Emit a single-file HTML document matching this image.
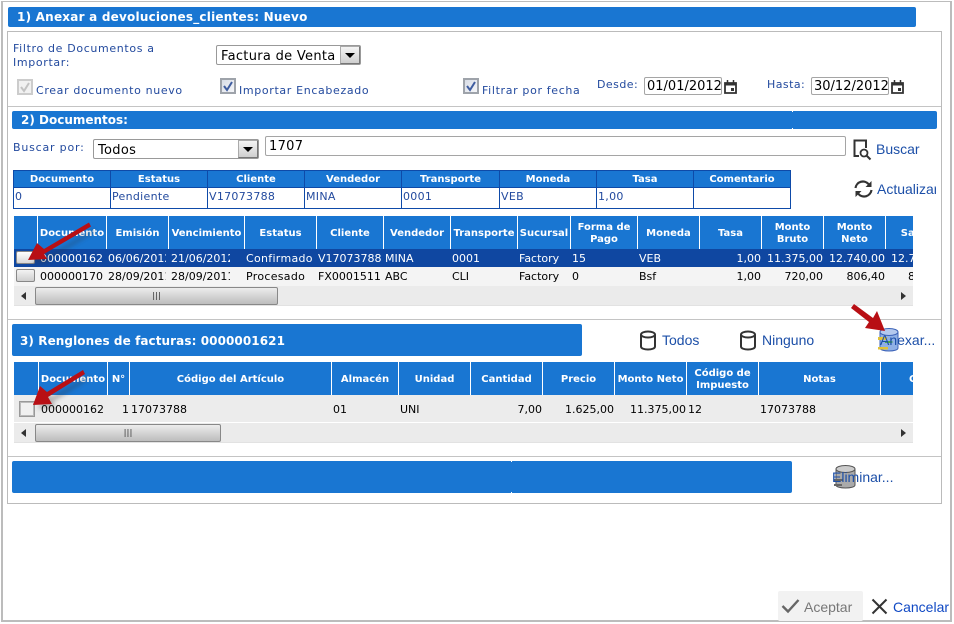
<!DOCTYPE html>
<html><head><meta charset="utf-8">
<style>
html,body{margin:0;padding:0;background:#fff;width:954px;height:624px;overflow:hidden}
body{position:relative;font-family:"DejaVu Sans","Liberation Sans",sans-serif;font-size:11px;color:#000}
div,span{position:absolute;white-space:nowrap;box-sizing:border-box}
.bar{background:#1976d2;border-radius:2px}
.bt{color:#fff;font-weight:bold;font-size:12px;letter-spacing:.22px;line-height:14px}
.l{color:#234a9e;font-size:11px;line-height:14px;letter-spacing:.65px}
.lnk{color:#1c4fa8;font-family:"Liberation Sans",sans-serif;font-size:14px;line-height:16px}
.sel{background:#fff;border:1px solid #999;border-radius:2px;font-size:13px;line-height:21px;padding-left:4px;letter-spacing:.3px}
.arr{top:0;right:0;bottom:0;background:linear-gradient(#f4f4f4,#cfcfcf);border:1px solid #777;border-top-color:#aaa;border-left-color:#aaa;width:20px}
.arr:after{content:"";position:absolute;left:4px;top:6px;border-left:5px solid transparent;border-right:5px solid transparent;border-top:5px solid #000}
.inp{background:#fff;border:1px solid #a5a5a5;border-radius:2px;font-size:13px;line-height:18px;overflow:hidden}
.cb{width:16px;height:16px;background:linear-gradient(135deg,#d8dde6,#f4f5f8);border:2px solid #9ea3aa}
.h{color:#fff;font-weight:bold;font-size:10px;line-height:12px;text-align:center;white-space:normal}
.th{color:#fff;font-weight:bold;font-size:10px;line-height:20px;text-align:center;top:170px;height:17px}
.td{color:#234a9e;font-size:11px;line-height:20px;top:187px;height:20px;padding-left:2px;letter-spacing:.3px}
.sep{width:1px;background:#fff}
.c{font-size:11px;line-height:18px}
.btn{width:19px;height:13px;border:1px solid #888;border-radius:2px;background:linear-gradient(#f3f3f3,#cfcfcf)}
.sb{background:#ebebeb;border-bottom:1px solid #e2e2e2}
.th2{height:18px;border:1px solid #888;border-radius:2px;background:linear-gradient(#ececec,#d4d4d4 50%,#bdbdbd)}
.g{color:#555;font-size:8px;line-height:16px;text-align:center;font-weight:bold}
</style></head>
<body>
<!-- window frame -->
<div style="left:1px;top:1px;width:951px;height:621px;border:1px solid #bcbcbc;border-width:1px 2px 2px 2px"></div>

<div class="bar" style="left:8px;top:7px;width:908px;height:20px"></div>
<span class="bt" style="left:17px;top:10px">1) Anexar a devoluciones_clientes: Nuevo</span>

<div style="left:7px;top:31px;width:935px;height:473px;border:1px solid #bbb"></div>
<div style="left:8px;top:106px;width:933px;height:1px;background:#c4c4c4"></div>
<div style="left:8px;top:319px;width:933px;height:1px;background:#c4c4c4"></div>
<div style="left:8px;top:456px;width:933px;height:1px;background:#c4c4c4"></div>

<span class="l" style="left:13px;top:42px">Filtro de Documentos a</span>
<span class="l" style="left:13px;top:56px">Importar:</span>
<div class="sel" style="left:216px;top:45px;width:145px;height:20px">Factura de Venta<div class="arr"></div></div>

<div class="cb" style="left:17px;top:79px;border-color:#ccc;background:#f1f1f1"></div>
<svg style="position:absolute;left:19px;top:81px" width="12" height="12"><path d="M2 6l3 4 5-8" fill="none" stroke="#c2c2c2" stroke-width="2"/></svg>
<span class="l" style="left:36px;top:84px">Crear documento nuevo</span>
<div class="cb" style="left:220px;top:78px"></div>
<svg style="position:absolute;left:222px;top:80px" width="12" height="12"><path d="M2 6l3 4 5-8" fill="none" stroke="#3f5da0" stroke-width="2"/></svg>
<span class="l" style="left:239px;top:84px">Importar Encabezado</span>
<div class="cb" style="left:463px;top:78px"></div>
<svg style="position:absolute;left:465px;top:80px" width="12" height="12"><path d="M2 6l3 4 5-8" fill="none" stroke="#3f5da0" stroke-width="2"/></svg>
<span class="l" style="left:482px;top:84px">Filtrar por fecha</span>
<span class="l" style="left:597px;top:78px;letter-spacing:.45px">Desde:</span>
<div class="inp" style="left:644px;top:77px;width:78px;height:18px;padding-left:2px">01/01/2012</div>
<svg style="position:absolute;left:724px;top:80px" width="13" height="14"><path d="M1 3h11v10H1z" fill="none" stroke="#333" stroke-width="1.800"/><path d="M1 4.500h11" stroke="#333" stroke-width="2"/><path d="M3.500 0v3M9.500 0v3" stroke="#333" stroke-width="1.500"/><rect x="7" y="8" width="3" height="3" fill="#333"/></svg>
<span class="l" style="left:767px;top:78px;letter-spacing:.45px">Hasta:</span>
<div class="inp" style="left:811px;top:77px;width:78px;height:18px;padding-left:2px">30/12/2012</div>
<svg style="position:absolute;left:891px;top:80px" width="13" height="14"><path d="M1 3h11v10H1z" fill="none" stroke="#333" stroke-width="1.800"/><path d="M1 4.500h11" stroke="#333" stroke-width="2"/><path d="M3.500 0v3M9.500 0v3" stroke="#333" stroke-width="1.500"/><rect x="7" y="8" width="3" height="3" fill="#333"/></svg>

<div class="bar" style="left:12px;top:111px;width:925px;height:18px"></div>
<div style="left:792px;top:111px;width:1px;height:1px;background:#fff"></div>
<div style="left:792px;top:128px;width:1px;height:1px;background:#fff"></div>
<span class="bt" style="left:21px;top:113px;letter-spacing:0">2) Documentos:</span>
<span class="l" style="left:13px;top:141px;letter-spacing:.8px">Buscar por:</span>
<div class="sel" style="left:93px;top:139px;width:166px;height:20px">Todos<div class="arr"></div></div>
<div class="inp" style="left:265px;top:136px;width:581px;height:20px;padding-left:3px;line-height:20px;letter-spacing:.3px">1707</div>
<svg style="position:absolute;left:852px;top:139px" width="21" height="22"><path d="M7 17H2.500V1.500H14V9" fill="none" stroke="#333" stroke-width="2"/><circle cx="12" cy="14" r="3.500" fill="none" stroke="#333" stroke-width="1.800"/><path d="M14.500 16.500l4 4" stroke="#333" stroke-width="2"/></svg>
<span class="lnk" style="left:876px;top:141px">Buscar</span>
<svg style="position:absolute;left:853px;top:179px" width="21" height="20" viewBox="0 0 21 20"><path d="M2.500 9a7.500 7.500 0 0 1 13-4l2 2M18.500 11a7.500 7.500 0 0 1-13 4l-2-2" fill="none" stroke="#333" stroke-width="2.200"/><path d="M18.500 2v6h-6zM2.500 18v-6h6z" fill="#333"/></svg>
<div class="lnk" style="left:877px;top:181px;width:59px;overflow:hidden">Actualizar</div>

<!-- table 1 -->
<div style="left:13px;top:170px;width:778px;height:39px;border:1px solid #0e4aa8"></div>
<div style="left:14px;top:171px;width:776px;height:16px;background:#1976d2"></div>
<div style="left:14px;top:187px;width:776px;height:1px;background:#0e4aa8"></div>
<div style="left:110px;top:170px;width:1px;height:38px;background:#0e4aa8"></div>
<div style="left:207px;top:170px;width:1px;height:38px;background:#0e4aa8"></div>
<div style="left:304px;top:170px;width:1px;height:38px;background:#0e4aa8"></div>
<div style="left:401px;top:170px;width:1px;height:38px;background:#0e4aa8"></div>
<div style="left:499px;top:170px;width:1px;height:38px;background:#0e4aa8"></div>
<div style="left:596px;top:170px;width:1px;height:38px;background:#0e4aa8"></div>
<div style="left:693px;top:170px;width:1px;height:38px;background:#0e4aa8"></div>
<span class="th" style="left:14px;width:96px">Documento</span>
<span class="th" style="left:111px;width:96px">Estatus</span>
<span class="th" style="left:208px;width:96px">Cliente</span>
<span class="th" style="left:305px;width:96px">Vendedor</span>
<span class="th" style="left:402px;width:97px">Transporte</span>
<span class="th" style="left:500px;width:96px">Moneda</span>
<span class="th" style="left:597px;width:96px">Tasa</span>
<span class="th" style="left:694px;width:96px">Comentario</span>
<span class="td" style="left:13px">0</span>
<span class="td" style="left:110px">Pendiente</span>
<span class="td" style="left:207px">V17073788</span>
<span class="td" style="left:304px">MINA</span>
<span class="td" style="left:401px">0001</span>
<span class="td" style="left:499px">VEB</span>
<span class="td" style="left:596px">1,00</span>

<!-- grid 1 -->
<div style="left:14px;top:216px;width:899px;height:90px;overflow:hidden">
<div style="left:0;top:0;width:899px;height:33px;background:#1976d2"></div>
<div style="left:0;top:33px;width:899px;height:18px;background:#0f47a1"></div>
<div style="left:0;top:51px;width:899px;height:19px;background:#f4f4f4"></div>
<div class="sep" style="left:23px;top:0;height:33px"></div>
<div class="sep" style="left:92px;top:0;height:33px"></div>
<div class="sep" style="left:154px;top:0;height:33px"></div>
<div class="sep" style="left:230px;top:0;height:33px"></div>
<div class="sep" style="left:302px;top:0;height:33px"></div>
<div class="sep" style="left:369px;top:0;height:33px"></div>
<div class="sep" style="left:436px;top:0;height:33px"></div>
<div class="sep" style="left:503px;top:0;height:33px"></div>
<div class="sep" style="left:556px;top:0;height:33px"></div>
<div class="sep" style="left:623px;top:0;height:33px"></div>
<div class="sep" style="left:685px;top:0;height:33px"></div>
<div class="sep" style="left:747px;top:0;height:33px"></div>
<div class="sep" style="left:809px;top:0;height:33px"></div>
<div class="sep" style="left:871px;top:0;height:33px"></div>
<div class="h" style="left:24px;top:12px;width:68px">Documento</div>
<div class="h" style="left:93px;top:12px;width:61px">Emisión</div>
<div class="h" style="left:155px;top:12px;width:75px">Vencimiento</div>
<div class="h" style="left:231px;top:12px;width:71px">Estatus</div>
<div class="h" style="left:303px;top:12px;width:66px">Cliente</div>
<div class="h" style="left:370px;top:12px;width:66px">Vendedor</div>
<div class="h" style="left:437px;top:12px;width:66px">Transporte</div>
<div class="h" style="left:504px;top:12px;width:52px">Sucursal</div>
<div class="h" style="left:557px;top:6px;width:66px">Forma de<br>Pago</div>
<div class="h" style="left:624px;top:12px;width:61px">Moneda</div>
<div class="h" style="left:686px;top:12px;width:61px">Tasa</div>
<div class="h" style="left:748px;top:6px;width:61px">Monto<br>Bruto</div>
<div class="h" style="left:810px;top:6px;width:61px">Monto<br>Neto</div>
<div class="h" style="left:872px;top:12px;width:61px">Saldo</div>

<div class="btn" style="left:2px;top:35px;background:linear-gradient(#fff,#d8d8d8)"></div>
<div class="btn" style="left:2px;top:53px"></div>

<span class="c" style="left:26px;top:34px;color:#fff">000000162</span>
<div class="c" style="left:94px;top:34px;color:#fff;width:58px;overflow:hidden">06/06/2012</div>
<div class="c" style="left:157px;top:34px;color:#fff;width:59px;overflow:hidden">21/06/2012</div>
<span class="c" style="left:232px;top:34px;color:#fff;letter-spacing:.3px">Confirmado</span>
<span class="c" style="left:304px;top:34px;color:#fff">V17073788</span>
<span class="c" style="left:371px;top:34px;color:#fff">MINA</span>
<span class="c" style="left:438px;top:34px;color:#fff">0001</span>
<span class="c" style="left:505px;top:34px;color:#fff">Factory</span>
<span class="c" style="left:558px;top:34px;color:#fff">15</span>
<span class="c" style="left:625px;top:34px;color:#fff">VEB</span>
<span class="c" style="right:152px;top:34px;color:#fff">1,00</span>
<span class="c" style="right:90px;top:34px;color:#fff">11.375,00</span>
<span class="c" style="right:28px;top:34px;color:#fff">12.740,00</span>
<span class="c" style="left:877px;top:34px;color:#fff">12.740,00</span>

<span class="c" style="left:26px;top:52px">000000170</span>
<div class="c" style="left:94px;top:52px;width:58px;overflow:hidden">28/09/2011</div>
<div class="c" style="left:157px;top:52px;width:59px;overflow:hidden">28/09/2011</div>
<span class="c" style="left:232px;top:52px;letter-spacing:.3px">Procesado</span>
<span class="c" style="left:304px;top:52px">FX0001511</span>
<span class="c" style="left:371px;top:52px">ABC</span>
<span class="c" style="left:438px;top:52px">CLI</span>
<span class="c" style="left:505px;top:52px">Factory</span>
<span class="c" style="left:558px;top:52px">0</span>
<span class="c" style="left:625px;top:52px">Bsf</span>
<span class="c" style="right:152px;top:52px">1,00</span>
<span class="c" style="right:90px;top:52px">720,00</span>
<span class="c" style="right:28px;top:52px">806,40</span>
<span class="c" style="left:894px;top:52px">806,40</span>

<div class="sb" style="left:0;top:70px;width:899px;height:20px"></div>
<div style="left:7px;top:76px;border-top:4px solid transparent;border-bottom:4px solid transparent;border-right:5px solid #333"></div>
<div style="left:887px;top:76px;border-top:4px solid transparent;border-bottom:4px solid transparent;border-left:5px solid #333"></div>
<div class="th2" style="left:21px;top:71px;width:243px"><div class="g" style="left:0;width:241px;top:0">|||</div></div>
</div>

<!-- section 3 -->
<div class="bar" style="left:12px;top:324px;width:570px;height:32px"></div>
<span class="bt" style="left:20px;top:334px;letter-spacing:.08px">3) Renglones de facturas: 0000001621</span>
<svg style="position:absolute;left:639px;top:330px" width="18" height="21"><ellipse cx="9" cy="4.500" rx="7" ry="3" fill="none" stroke="#333" stroke-width="2"/><path d="M2 4.500v12c0 4 14 4 14 0v-12" fill="none" stroke="#333" stroke-width="2"/></svg>
<span class="lnk" style="left:662px;top:332px">Todos</span>
<svg style="position:absolute;left:739px;top:330px" width="18" height="21"><ellipse cx="9" cy="4.500" rx="7" ry="3" fill="none" stroke="#333" stroke-width="2"/><path d="M2 4.500v12c0 4 14 4 14 0v-12" fill="none" stroke="#333" stroke-width="2"/></svg>
<span class="lnk" style="left:762px;top:332px">Ninguno</span>
<svg style="position:absolute;left:877px;top:327px" width="24" height="26"><path d="M3 5v16c0 4 18 4 18 0V5z" fill="#8fb0e6" stroke="#3c63b8"/><ellipse cx="12" cy="5" rx="9" ry="3.500" fill="#b4c9ee" stroke="#3c63b8"/><rect x="1" y="10" width="9" height="3" fill="#e0c23a"/><rect x="1" y="20" width="10" height="2.500" fill="#e0c23a"/><path d="M8 14h6l-2-2 4 3-4 3 2-2H8z" fill="#4aa84a"/></svg>
<span class="lnk" style="left:880px;top:332px">Anexar...</span>

<!-- grid 2 -->
<div style="left:14px;top:362px;width:899px;height:81px;overflow:hidden">
<div style="left:0;top:0;width:899px;height:33px;background:#1976d2"></div>
<div style="left:0;top:33px;width:899px;height:27px;background:#ececec"></div>
<div class="sep" style="left:24px;top:0;height:33px"></div>
<div class="sep" style="left:93px;top:0;height:33px"></div>
<div class="sep" style="left:115px;top:0;height:33px"></div>
<div class="sep" style="left:317px;top:0;height:33px"></div>
<div class="sep" style="left:384px;top:0;height:33px"></div>
<div class="sep" style="left:456px;top:0;height:33px"></div>
<div class="sep" style="left:528px;top:0;height:33px"></div>
<div class="sep" style="left:600px;top:0;height:33px"></div>
<div class="sep" style="left:672px;top:0;height:33px"></div>
<div class="sep" style="left:744px;top:0;height:33px"></div>
<div class="sep" style="left:866px;top:0;height:33px"></div>
<div class="h" style="left:25px;top:12px;width:68px">Documento</div>
<div class="h" style="left:94px;top:12px;width:21px">N°</div>
<div class="h" style="left:116px;top:12px;width:201px">Código del Artículo</div>
<div class="h" style="left:318px;top:12px;width:66px">Almacén</div>
<div class="h" style="left:385px;top:12px;width:71px">Unidad</div>
<div class="h" style="left:457px;top:12px;width:71px">Cantidad</div>
<div class="h" style="left:529px;top:12px;width:71px">Precio</div>
<div class="h" style="left:601px;top:12px;width:71px">Monto Neto</div>
<div class="h" style="left:673px;top:6px;width:71px">Código de<br>Impuesto</div>
<div class="h" style="left:745px;top:12px;width:121px">Notas</div>
<div class="h" style="left:895px;top:12px;width:40px;text-align:left">Comentario</div>
<div style="left:5px;top:39px;width:16px;height:16px;background:#f0f0f0;border:1px solid #999;box-shadow:inset 0 0 0 1px #bbb"></div>
<span class="c" style="left:27px;top:39px">000000162</span>
<span class="c" style="left:108px;top:39px">1</span>
<span class="c" style="left:117px;top:39px">17073788</span>
<span class="c" style="left:319px;top:39px">01</span>
<span class="c" style="left:386px;top:39px">UNI</span>
<span class="c" style="right:371px;top:39px">7,00</span>
<span class="c" style="right:299px;top:39px">1.625,00</span>
<span class="c" style="right:227px;top:39px">11.375,00</span>
<span class="c" style="left:674px;top:39px">12</span>
<span class="c" style="left:746px;top:39px">17073788</span>
<div class="sb" style="left:0;top:61px;width:899px;height:20px"></div>
<div style="left:7px;top:67px;border-top:4px solid transparent;border-bottom:4px solid transparent;border-right:5px solid #333"></div>
<div style="left:887px;top:67px;border-top:4px solid transparent;border-bottom:4px solid transparent;border-left:5px solid #333"></div>
<div class="th2" style="left:21px;top:62px;width:186px"><div class="g" style="left:0;width:184px;top:0">|||</div></div>
</div>

<div class="bar" style="left:12px;top:461px;width:780px;height:32px"></div>
<div style="left:511px;top:461px;width:1px;height:1px;background:#fff"></div>
<div style="left:511px;top:492px;width:1px;height:1px;background:#fff"></div>
<svg style="position:absolute;left:834px;top:464px" width="24" height="26"><path d="M2 5v16c0 4 19 4 19 0V5z" fill="#aaa" stroke="#555"/><ellipse cx="11.500" cy="5" rx="9.500" ry="3.500" fill="#ccc" stroke="#555"/><rect x="0" y="15" width="9" height="2" fill="#666"/><rect x="0" y="20" width="8" height="2" fill="#666"/></svg>
<span class="lnk" style="left:832px;top:469px">Eliminar...</span>

<!-- footer -->
<div style="left:778px;top:591px;width:85px;height:30px;background:#f2f2f2;border-radius:2px"></div>
<svg style="position:absolute;left:781px;top:598px" width="19" height="16"><path d="M1.500 8l5.500 5.500L17.500 2" fill="none" stroke="#666" stroke-width="2.400"/></svg>
<span class="lnk" style="left:804px;top:599px;color:#777">Aceptar</span>
<svg style="position:absolute;left:871px;top:598px" width="17" height="17"><path d="M1.500 1.500l14 14M15.500 1.500l-14 14" stroke="#333" stroke-width="2"/></svg>
<span class="lnk" style="left:893px;top:599px;color:#1049c4">Cancelar</span>

<!-- arrows -->
<svg style="position:absolute;left:0;top:0" width="954" height="624">
<defs><filter id="b" x="-30%" y="-30%" width="160%" height="160%"><feGaussianBlur stdDeviation="2"/></filter></defs>
<g opacity=".3" fill="#333" filter="url(#b)" transform="translate(4,4)">
<path d="M90 225L42 253 39 248 28 260 46 259 44 256 91 228z"/>
<path d="M84 372L47 393 44 388 33 405 51 403 49 398 85 375z"/>
</g>
<path d="M89 222.500L44 249 37 243 28 260 47 259 44 254 91 226.500z" fill="#b80f14"/>
<path d="M83 370L47 392 40 386 33 405 52 404 48 397 85 374z" fill="#b80f14"/>
<path d="M854 304L873 318 877 311 885 331 865 328 869 322 851 308z" fill="#b80f14"/>
</svg>
</body></html>
